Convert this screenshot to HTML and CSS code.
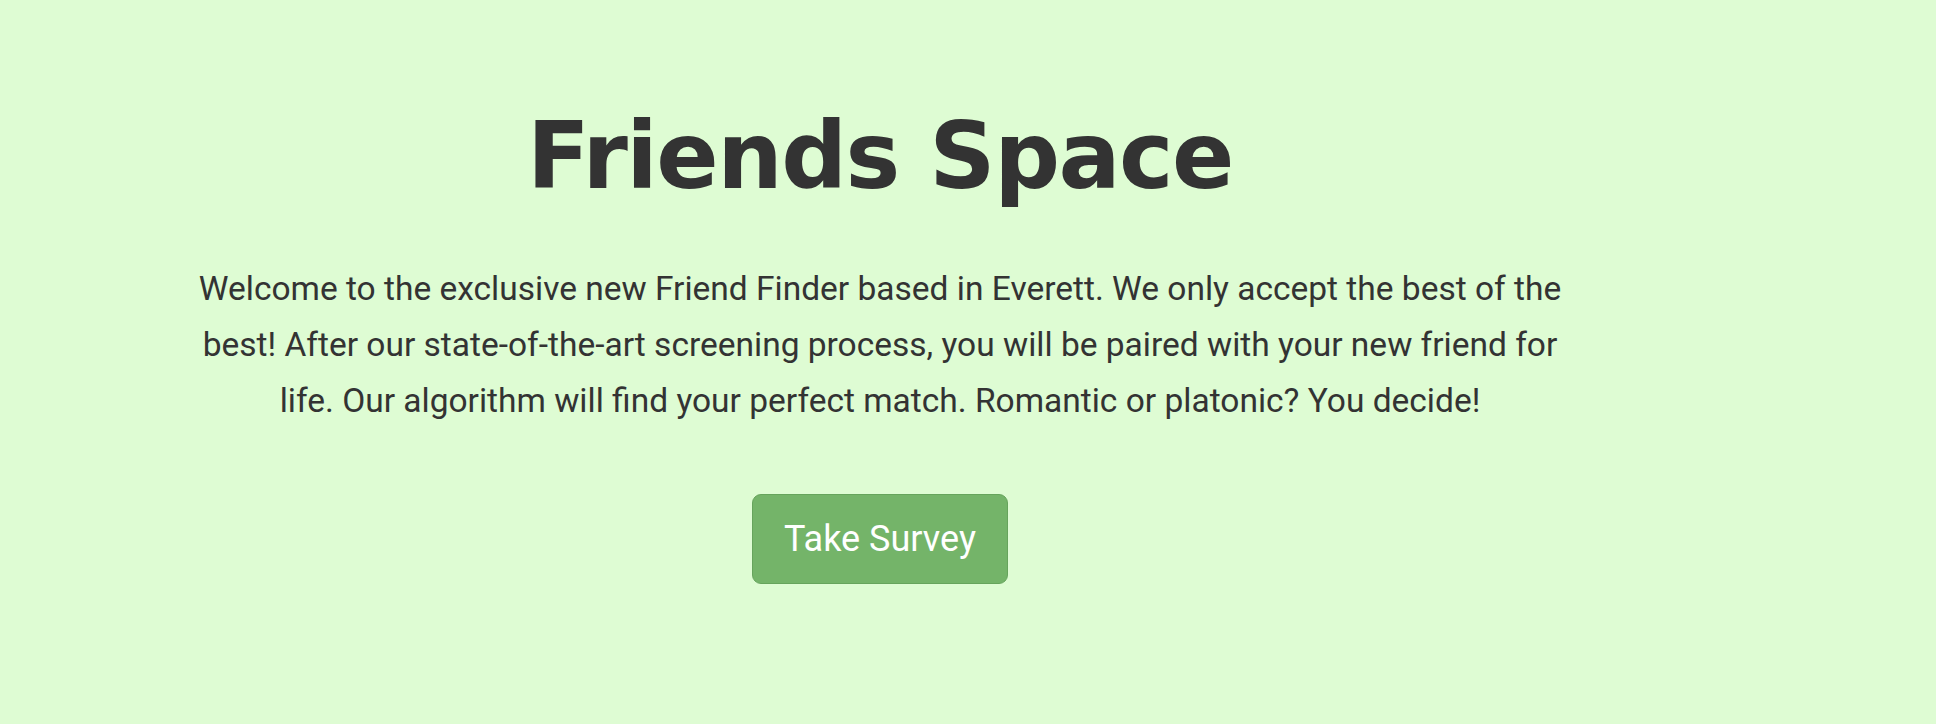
FILE: index.html
```html
<!DOCTYPE html>
<html>
<head>
<meta charset="utf-8">
<link rel="stylesheet" href="styles.css">
</head>
<body>
<main class="page">
  <section class="hero">
    <h1 class="title">Friends Space</h1>
    <p class="intro">Welcome to the exclusive new Friend Finder based in Everett. We only accept the best of the best! After our state-of-the-art screening process, you will be paired with your new friend for life. Our algorithm will find your perfect match. Romantic or platonic? You decide!</p>
    <a class="btn" href="#">Take Survey</a>
  </section>
</main>
</body>
</html>
```
FILE: styles.css
```css
html, body {
  margin: 0;
  padding: 0;
  background: #defcd3;
  height: 100%;
}
body {
  font-family: Roboto, "Liberation Sans", sans-serif;
  color: #333333;
}
.page {
  padding-left: 185px;
  width: 1390px;
}
.hero {
  display: flex;
  flex-direction: column;
  align-items: center;
  text-align: center;
  padding-top: 97px;
}
.title {
  margin: 0;
  font-family: "DejaVu Sans", Lato, sans-serif;
  font-weight: 700;
  font-size: 92px;
  line-height: 120px;
  letter-spacing: -1.5px;
  color: #333333;
}
.intro {
  margin: 44px 0 0;
  font-size: 33.5px;
  line-height: 56px;
}
.btn {
  margin-top: 65px;
  display: flex;
  align-items: center;
  justify-content: center;
  width: 256px;
  height: 90px;
  box-sizing: border-box;
  background: #74b469;
  border: 1px solid #66a45c;
  border-radius: 9px;
  color: #ffffff;
  font-size: 36px;
  text-decoration: none;
}
```
